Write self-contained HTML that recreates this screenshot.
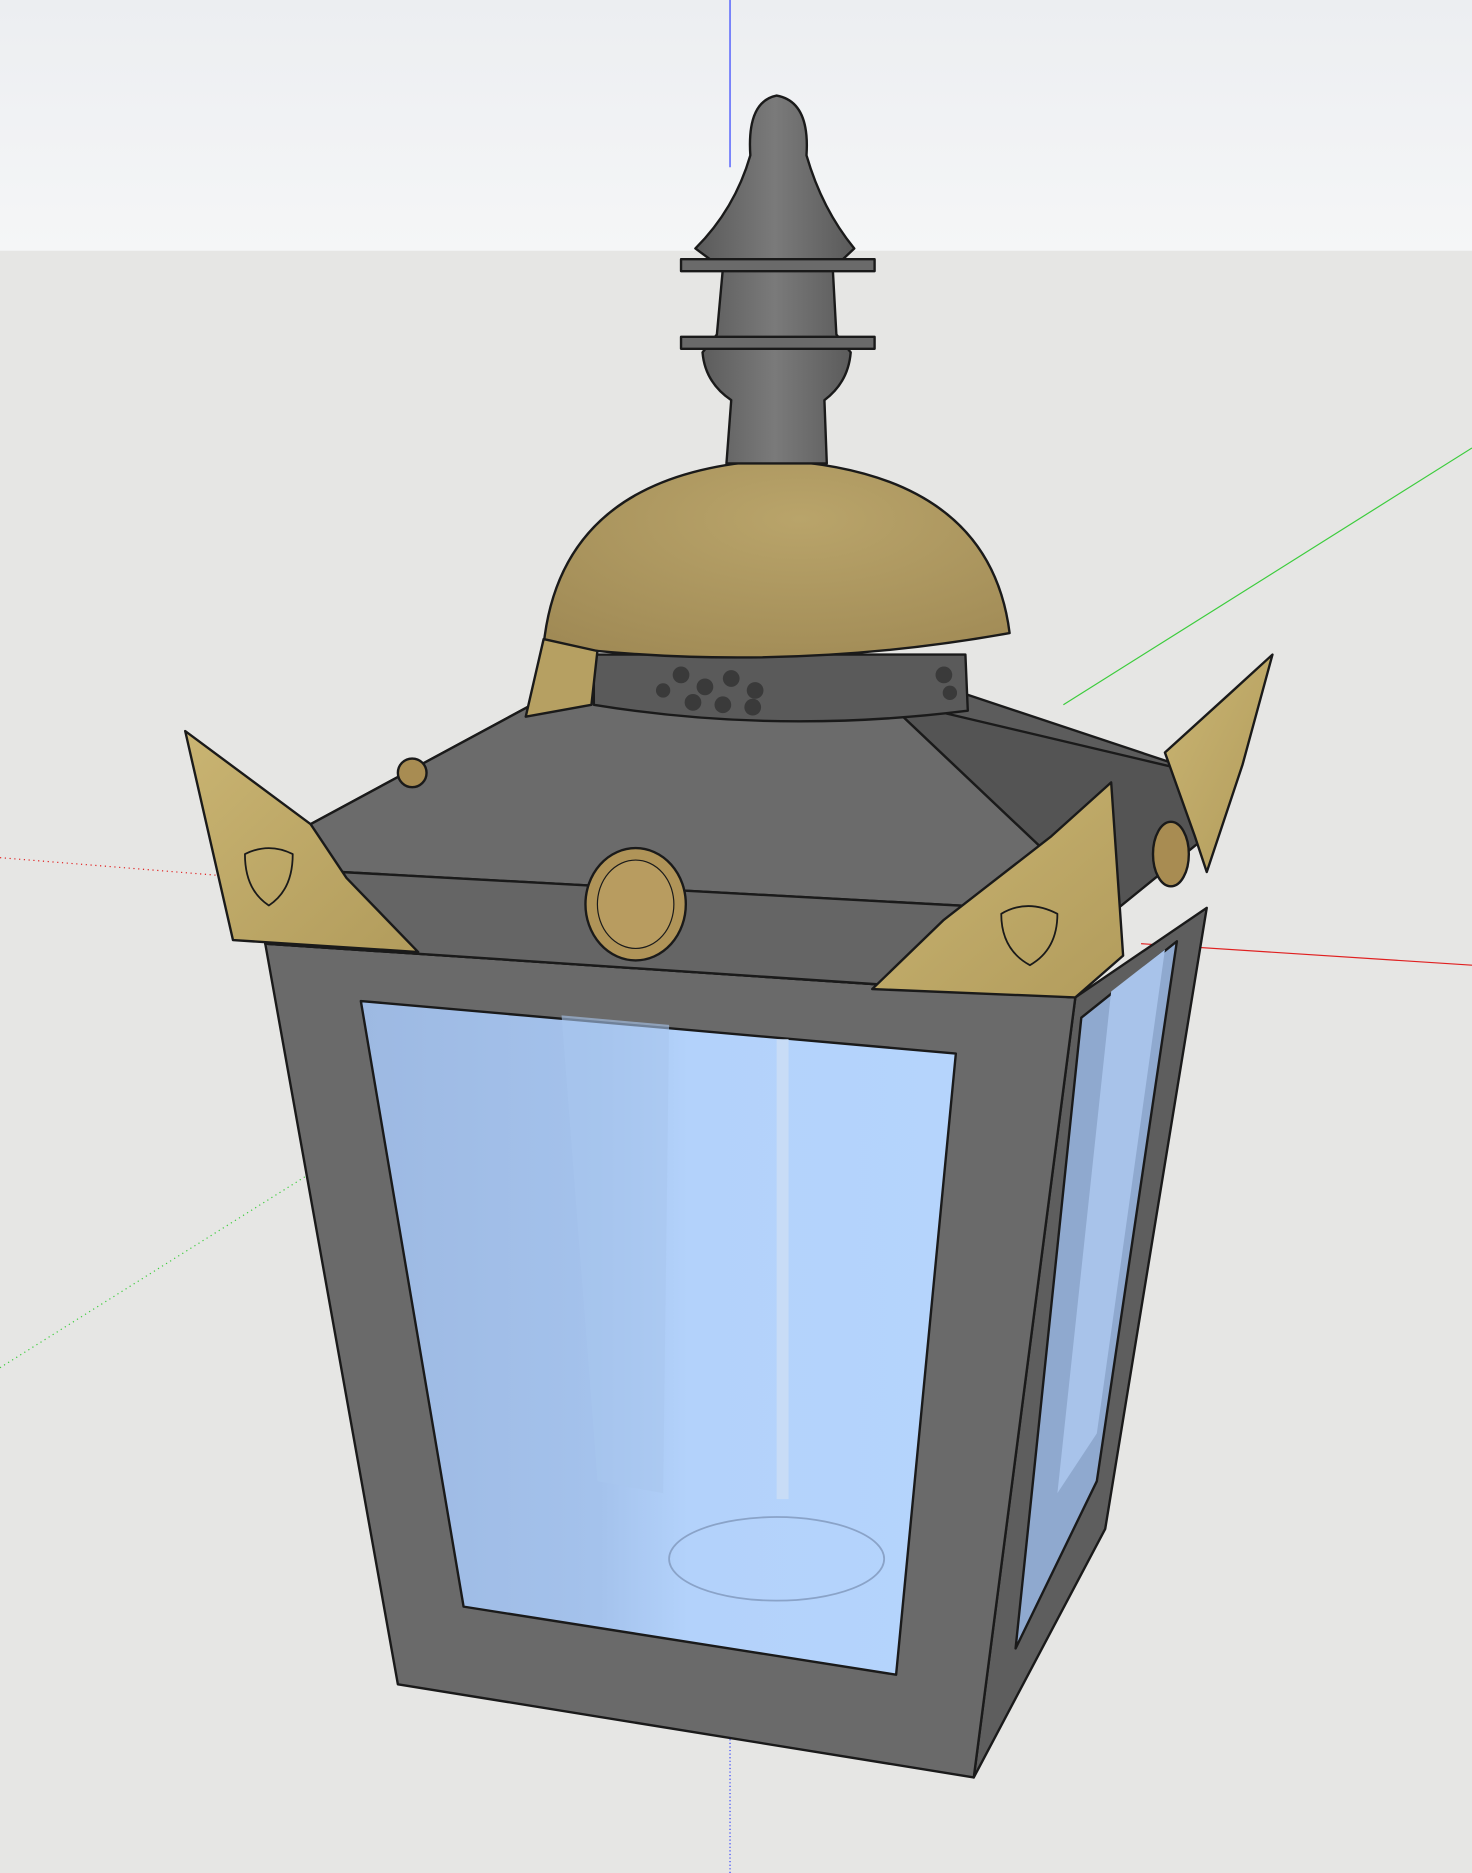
<!DOCTYPE html>
<html><head><meta charset="utf-8"><style>
html,body{margin:0;padding:0;background:#e6e6e4;}
svg{display:block;}
</style></head><body>
<svg width="1472" height="1873" viewBox="0 0 1232 1568" preserveAspectRatio="none" xmlns="http://www.w3.org/2000/svg">
<defs>
<linearGradient id="sky" x1="0" y1="0" x2="0" y2="1"><stop offset="0" stop-color="#eceef1"/><stop offset="1" stop-color="#f5f6f7"/></linearGradient>
<radialGradient id="dome" cx="0.55" cy="0.3" r="0.8"><stop offset="0" stop-color="#b9a46a"/><stop offset="1" stop-color="#a08a55"/></radialGradient>
<linearGradient id="fin" x1="0" y1="0" x2="1" y2="0"><stop offset="0" stop-color="#5a5a5a"/><stop offset="0.5" stop-color="#7a7a7a"/><stop offset="1" stop-color="#5a5a5a"/></linearGradient>
<linearGradient id="glass" x1="0" y1="0" x2="1" y2="0"><stop offset="0" stop-color="#9db9e2"/><stop offset="0.4" stop-color="#a4c2ec"/><stop offset="0.55" stop-color="#b3d2fb"/><stop offset="1" stop-color="#b5d4fc"/></linearGradient>
<linearGradient id="brass" x1="0" y1="0" x2="1" y2="1"><stop offset="0" stop-color="#c9b472"/><stop offset="1" stop-color="#b29c5c"/></linearGradient>
</defs>
<rect x="0" y="0" width="1232" height="210" fill="url(#sky)"/>
<rect x="0" y="210" width="1232" height="1358" fill="#e6e6e4"/>
<!-- axes -->
<line x1="611" y1="0" x2="611" y2="140" stroke="#3040ff" stroke-width="1"/>
<line x1="611" y1="1450" x2="611" y2="1568" stroke="#3040ff" stroke-width="1" stroke-dasharray="1,2"/>
<line x1="890" y1="590" x2="1232" y2="375" stroke="#3ccc3c" stroke-width="1"/>
<line x1="0" y1="1145" x2="495" y2="835" stroke="#3ccc3c" stroke-width="1" stroke-dasharray="1,3"/>
<line x1="955" y1="790" x2="1232" y2="808" stroke="#e02020" stroke-width="1"/>
<line x1="0" y1="718" x2="185" y2="733" stroke="#e02020" stroke-width="1" stroke-dasharray="1,3"/>
<g stroke="#1a1a1a" stroke-width="2" stroke-linejoin="round">
<!-- side body -->
<polygon points="900,835 1010,760 925,1280 815,1488" fill="#5e5e5e"/>
<polygon points="905,852 985,788 918,1240 850,1380" fill="#8fa9cf"/>
<polygon points="930,830 975,795 918,1200 885,1250" fill="#a8c3ea" stroke="none"/>
<!-- front body -->
<polygon points="222,790 900,835 815,1488 333,1410" fill="#6a6a6a"/>
<polygon points="302,838 800,882 750,1402 388,1345" fill="url(#glass)"/>
<polygon points="470,850 560,858 555,1250 500,1240" fill="#a9c6ee" stroke="none" opacity="0.6"/>
<ellipse cx="650" cy="1305" rx="90" ry="35" fill="none" stroke="#8aa3c8" stroke-width="1.5"/>
<line x1="655" y1="870" x2="655" y2="1255" stroke="#c8dcf6" stroke-width="10"/>
<!-- roof -->
<polygon points="245,698 510,555 790,575 1015,650 1010,700 935,745 900,835 222,790" fill="#5c5c5c"/>
<polygon points="245,698 510,555 740,585 930,765 285,730" fill="#6b6b6b"/>
<polygon points="740,585 1015,650 1010,700 930,765" fill="#545454"/>
<polygon points="285,730 930,765 900,835 222,790" fill="#656565"/>
<!-- collar -->
<path d="M497,548 L808,548 L810,595 Q650,615 497,590 Z" fill="#5a5a5a"/>
<!-- dome -->
<path d="M455,540 Q470,395 648,385 Q828,395 845,530 Q650,565 455,540 Z" fill="url(#dome)"/>
<!-- finial -->
<path d="M608,388 L612,335 Q590,320 588,295 L600,280 L605,225 L582,208 Q615,175 628,130 Q625,85 650,80 Q678,85 675,130 Q688,175 715,208 L697,225 L700,280 L712,295 Q710,320 690,335 L692,388 Z" fill="url(#fin)"/>
<rect x="570" y="217" width="162" height="10" fill="#6a6a6a"/>
<rect x="570" y="282" width="162" height="10" fill="#6a6a6a"/>
<!-- brass corners -->
<polygon points="155,612 260,690 290,735 350,797 195,787" fill="url(#brass)"/>
<path d="M205,715 Q225,705 245,715 Q245,745 225,758 Q205,745 205,715 Z" fill="none" stroke-width="1.5"/>
<polygon points="730,828 790,770 880,700 930,655 940,800 900,835" fill="url(#brass)"/>
<path d="M838,765 Q860,752 885,765 Q885,795 862,808 Q838,795 838,765 Z" fill="none" stroke-width="1.5"/>
<polygon points="1065,548 1040,640 1010,730 1000,700 975,630 1030,580" fill="url(#brass)"/>
<polygon points="440,600 455,535 500,545 495,590" fill="#b6a062"/>
<!-- knobs -->
<ellipse cx="532" cy="757" rx="42" ry="47" fill="#b09458"/>
<ellipse cx="532" cy="757" rx="32" ry="37" fill="#b89c60" stroke-width="1"/>
<ellipse cx="980" cy="715" rx="15" ry="27" fill="#a88c52"/>
<ellipse cx="345" cy="647" rx="12" ry="12" fill="#a88c52"/>
</g>
<g fill="#3a3a3a">
<circle cx="570" cy="565" r="7"/><circle cx="590" cy="575" r="7"/><circle cx="612" cy="568" r="7"/><circle cx="632" cy="578" r="7"/><circle cx="580" cy="588" r="7"/><circle cx="605" cy="590" r="7"/><circle cx="630" cy="592" r="7"/><circle cx="555" cy="578" r="6"/><circle cx="790" cy="565" r="7"/><circle cx="795" cy="580" r="6"/>
</g>
</svg>
</body></html>
